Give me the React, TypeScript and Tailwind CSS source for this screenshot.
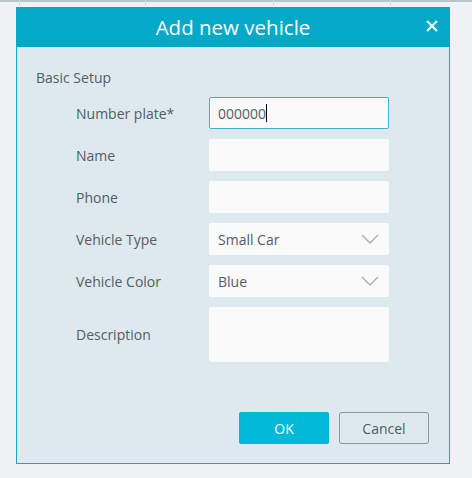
import React from 'react';

const Chevron = () => (
  <svg width="18" height="10" viewBox="0 0 18 10" className="absolute right-[10px] top-[11px]">
    <path d="M1 1 L9 9 L17 1" fill="none" stroke="#a9b1b6" strokeWidth="1.4" />
  </svg>
);

const Row = ({ label, children, tall }: { label: string; children: React.ReactNode; tall?: boolean }) => (
  <div className={`flex items-center ${tall ? 'h-[55px]' : 'h-[32px]'}`}>
    <div className="w-[133px] text-[14px] text-[#555c61]">{label}</div>
    {children}
  </div>
);

export default function App() {
  return (
    <div
      className="relative w-[472px] h-[478px] bg-[#eef2f5] overflow-hidden"
      style={{ fontFamily: '"Open Sans", "Noto Sans", sans-serif' }}
    >
      {/* table header strip behind the dialog */}
      <div className="absolute left-0 top-0 w-full h-[2px] bg-[#bcc4cb]" />
      <div className="absolute left-[19px] top-0 w-px h-[6px] bg-[#d6dce1]" />
      <div className="absolute left-[145px] top-0 w-px h-[6px] bg-[#d6dce1]" />
      <div className="absolute left-[273px] top-0 w-px h-[6px] bg-[#d6dce1]" />
      <div className="absolute left-[390px] top-0 w-px h-[6px] bg-[#d6dce1]" />

      <div className="absolute left-[16px] top-[7px] w-[434px] h-[457px] flex flex-col border border-[#16a8c6] bg-[#dde9ee]">
        <div className="relative h-[40px] shrink-0 bg-[#03a9c7] flex items-center justify-center -mx-px -mt-px">
          <span className="text-[20.5px] text-white">Add new vehicle</span>
          <svg width="12" height="12" viewBox="0 0 12 12" className="absolute right-[12px] top-[13px]">
            <path d="M1 1 L11 11 M11 1 L1 11" stroke="#fff" strokeWidth="2" />
          </svg>
        </div>

        <div className="flex-1 flex flex-col pl-[19px]">
          <div className="mt-[21px] text-[14px] text-[#555c61] leading-[20px]">Basic Setup</div>
          <div className="mt-[9px] pl-[40px] flex flex-col gap-[10px]">
            <Row label="Number plate*">
              <div className="w-[180px] h-[32px] rounded-[2px] bg-[#fafafa] border border-[#3bb3cb] flex items-center pl-[8px] text-[14px] text-[#555c61]">
                000000<span className="w-px h-[18px] bg-black" />
              </div>
            </Row>
            <Row label="Name">
              <div className="w-[180px] h-[32px] rounded-[2px] bg-[#fafafa]" />
            </Row>
            <Row label="Phone">
              <div className="w-[180px] h-[32px] rounded-[2px] bg-[#fafafa]" />
            </Row>
            <Row label="Vehicle Type">
              <div className="relative w-[180px] h-[32px] rounded-[2px] bg-[#fafafa] flex items-center pl-[9px] text-[14px] text-[#555c61]">
                Small Car
                <Chevron />
              </div>
            </Row>
            <Row label="Vehicle Color">
              <div className="relative w-[180px] h-[32px] rounded-[2px] bg-[#fafafa] flex items-center pl-[9px] text-[14px] text-[#555c61]">
                Blue
                <Chevron />
              </div>
            </Row>
            <Row label="Description" tall>
              <div className="w-[180px] h-[55px] rounded-[2px] bg-[#fafafa]" />
            </Row>
          </div>

          <div className="mt-auto mb-[19px] pr-[20px] flex justify-end gap-[10px]">
            <button className="w-[90px] h-[32px] rounded-[2px] bg-[#00b8d8] text-white text-[14px]">OK</button>
            <button className="w-[90px] h-[32px] rounded-[3px] border border-[#8d979c] text-[#555c61] text-[14px]">Cancel</button>
          </div>
        </div>
      </div>
    </div>
  );
}
